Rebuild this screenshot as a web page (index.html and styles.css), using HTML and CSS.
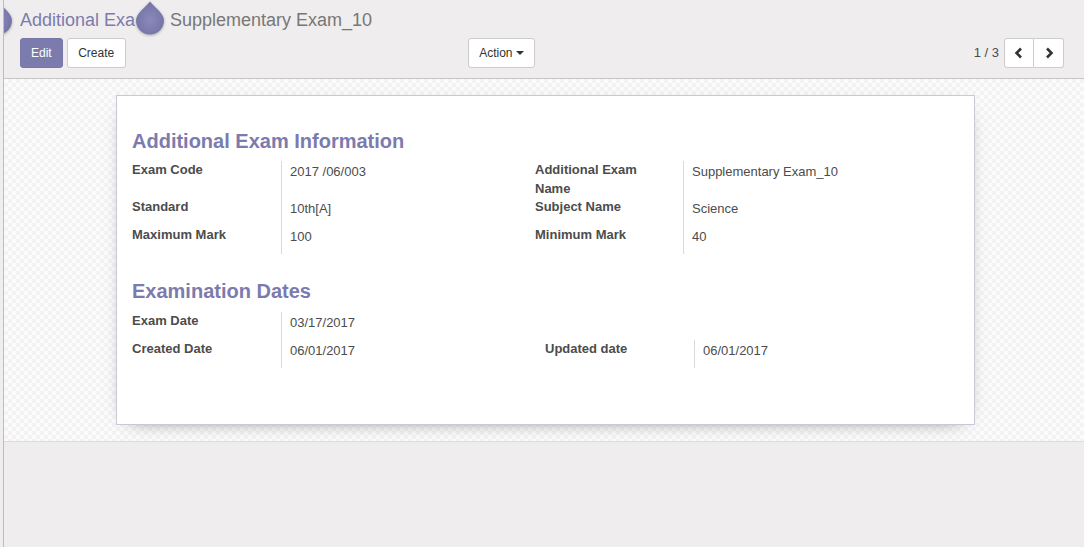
FILE: index.html
```html
<!DOCTYPE html>
<html lang="en">
<head>
<meta charset="utf-8">
<title>Supplementary Exam_10</title>
<link rel="stylesheet" href="styles.css">
</head>
<body>
<div class="app">
  <div class="control-panel">
    <ol class="breadcrumb">
      <li class="crumb">
        <svg class="drop drop-first" viewBox="0 0 30 34" width="30" height="34"><defs><radialGradient id="g1" cx="50%" cy="55%" r="55%"><stop offset="0" stop-color="#8a89b8"/><stop offset="1" stop-color="#7473a7"/></radialGradient></defs><path d="M15 0.5 C19 6 29 12 29 19.5 A14 14 0 0 1 1 19.5 C1 12 11 6 15 0.5 Z" fill="url(#g1)"/></svg>
        <a class="crumb-link" href="#">Additional Exam</a>
      </li>
      <li class="crumb">
        <svg class="drop" viewBox="0 0 30 34" width="30" height="34"><defs><radialGradient id="g2" cx="50%" cy="55%" r="55%"><stop offset="0" stop-color="#8a89b8"/><stop offset="1" stop-color="#7473a7"/></radialGradient></defs><path d="M15 0.5 C19 6 29 12 29 19.5 A14 14 0 0 1 1 19.5 C1 12 11 6 15 0.5 Z" fill="url(#g2)"/></svg>
        <span class="crumb-active">Supplementary Exam_10</span>
      </li>
    </ol>
    <div class="cp-row">
      <div class="cp-left">
        <button class="btn btn-primary">Edit</button>
        <button class="btn btn-default">Create</button>
        <div class="sidebar">
          <button class="btn btn-default">Action <span class="caret"></span></button>
        </div>
      </div>
      <div class="cp-right">
        <span class="pager-value">1 / 3</span>
        <div class="btn-group">
          <button class="btn btn-default btn-icon"><svg viewBox="0 0 10 12" width="10" height="12"><polyline points="7,1.5 2.5,6 7,10.5" fill="none" stroke="#333" stroke-width="2.6"/></svg></button>
          <button class="btn btn-default btn-icon"><svg viewBox="0 0 10 12" width="10" height="12"><polyline points="3,1.5 7.5,6 3,10.5" fill="none" stroke="#333" stroke-width="2.6"/></svg></button>
        </div>
      </div>
    </div>
  </div>
  <div class="form-bg">
    <div class="sheet">
      <h2 class="sep">Additional Exam Information</h2>
      <div class="group group-info">
        <div class="lbl">Exam Code</div>
        <div class="val">2017 /06/003</div>
        <div class="lbl">Additional Exam Name</div>
        <div class="val">Supplementary Exam_10</div>
        <div class="lbl">Standard</div>
        <div class="val">10th[A]</div>
        <div class="lbl">Subject Name</div>
        <div class="val">Science</div>
        <div class="lbl">Maximum Mark</div>
        <div class="val">100</div>
        <div class="lbl">Minimum Mark</div>
        <div class="val">40</div>
      </div>
      <h2 class="sep sep-2">Examination Dates</h2>
      <div class="group group-dates">
        <div class="lbl">Exam Date</div>
        <div class="val">03/17/2017</div>
        <div class="empty"></div>
        <div class="empty"></div>
        <div class="lbl">Created Date</div>
        <div class="val">06/01/2017</div>
        <div class="lbl">Updated date</div>
        <div class="val">06/01/2017</div>
      </div>
    </div>
  </div>
</div>
</body>
</html>
```
FILE: styles.css
```css
html, body {
  margin: 0;
  padding: 0;
  height: 100%;
}
body {
  background: #efedee;
  font-family: "Liberation Sans", Arial, sans-serif;
  font-size: 13px;
  line-height: 1.42857;
  color: #4c4c4c;
  padding-left: 3px;
  box-sizing: border-box;
}
.app {
  min-height: 100%;
  border-left: 1px solid #bdbdbd;
  overflow: hidden;
}
.control-panel {
  height: 78px;
  border-bottom: 1px solid #c6c6c6;
  padding: 0 20px 0 16px;
}
.breadcrumb {
  list-style: none;
  margin: 0 0 0 -37px;
  padding: 0;
  display: flex;
  height: 36px;
  align-items: flex-start;
}
.crumb {
  display: flex;
  align-items: flex-start;
}
.drop {
  display: block;
  flex: none;
  margin-top: 1px;
  filter: drop-shadow(0 1px 1.5px rgba(0, 0, 0, 0.28));
  position: relative;
  z-index: 1;
}
.crumb-link,
.crumb-active {
  display: block;
  font-size: 18px;
  line-height: 30px;
  margin-top: 5px;
  white-space: nowrap;
  text-decoration: none;
}
.crumb-link {
  color: #7c7bad;
  margin-left: 7px;
  max-width: 115px;
  overflow: hidden;
  text-overflow: clip;
}
.crumb-active {
  color: #777777;
  margin-left: 5px;
}
.cp-row {
  display: flex;
  margin-top: 2px;
  height: 30px;
}
.cp-left {
  width: 524px;
  display: flex;
  gap: 4px;
}
.sidebar {
  margin-left: auto;
  margin-right: 9px;
}
.cp-right {
  flex: 1;
  display: flex;
  justify-content: flex-end;
  align-items: center;
}
.btn {
  font-family: "Liberation Sans", Arial, sans-serif;
  font-size: 12px;
  line-height: 18px;
  height: 30px;
  padding: 5px 10px;
  border: 1px solid #cccccc;
  border-radius: 3px;
  background: #ffffff;
  color: #333333;
  box-sizing: border-box;
  cursor: pointer;
  display: inline-flex;
  align-items: center;
}
.btn-default {
  padding: 5px 10.5px;
}
.btn-primary {
  background: #7c7bad;
  border-color: #7877a9;
  color: #ffffff;
}
.caret {
  display: inline-block;
  width: 0;
  height: 0;
  margin-left: 3px;
  border-top: 4px solid #333;
  border-left: 4px solid transparent;
  border-right: 4px solid transparent;
}
.pager-value {
  font-size: 13px;
  color: #4c4c4c;
  margin-right: 5px;
}
.btn-group {
  display: flex;
}
.btn-group .btn-icon {
  width: 30px;
  padding: 0;
  justify-content: center;
}
.btn-group .btn-icon:first-child {
  border-top-right-radius: 0;
  border-bottom-right-radius: 0;
}
.btn-group .btn-icon:last-child {
  border-left: none;
  border-top-left-radius: 0;
  border-bottom-left-radius: 0;
}
.form-bg {
  background-color: #fbfbfb;
  background-image: conic-gradient(#f3f3f3 25%, transparent 0 50%, #f3f3f3 0 75%, transparent 0);
  background-size: 8px 8px;
  border-bottom: 1px solid #dcdcdc;
  padding: 16px 0;
}
.sheet {
  width: 859px;
  box-sizing: border-box;
  margin: 0 auto 0 112px;
  background: #ffffff;
  border: 1px solid #c9c8d6;
  box-shadow: 0 5px 20px -15px #000;
  padding: 33px 16px 56px 15px;
}
.sep {
  margin: 0 0 8px;
  font-size: 20px;
  line-height: 24px;
  font-weight: bold;
  color: #7c7bad;
}
.sep-2 {
  margin-top: 25px;
  margin-bottom: 9px;
}
.group {
  display: grid;
}
.group-info {
  grid-template-columns: 149px 254px 148px 1fr;
}
.group-dates {
  grid-template-columns: 149px 264px 149px 1fr;
}
.lbl {
  font-weight: bold;
  color: #4c4c4c;
  padding-right: 10px;
}
.val {
  border-left: 1px solid #dadada;
  padding: 2px 0 7.5px 8px;
  color: #4c4c4c;
}
```
